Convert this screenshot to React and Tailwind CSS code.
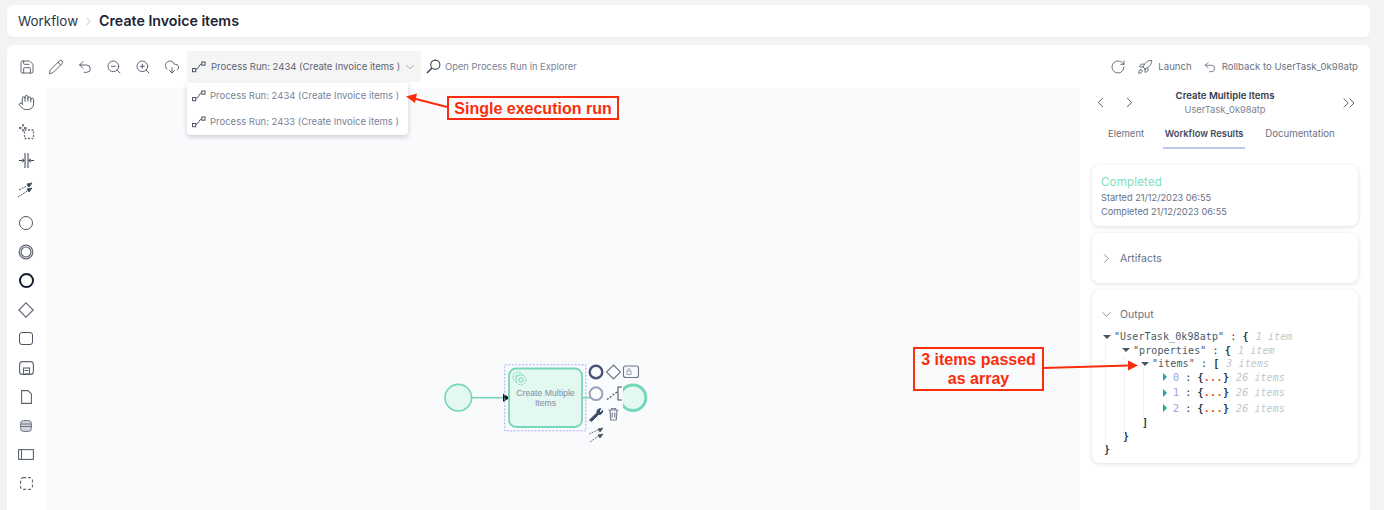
import React from "react";
import { Save, Pencil, Undo2, ZoomOut, ZoomIn, CloudDownload, ChevronDown, ChevronLeft, ChevronRight, ChevronsRight, RotateCw, Rocket, Hand } from "lucide-react";

const font = { fontFamily: "Inter, 'Noto Sans', sans-serif" };

function RunIcon({ className = "" }) {
  return (
    <svg width="14" height="12" viewBox="0 0 14 12" fill="none" stroke="#4b5563" strokeWidth="1" className={`shrink-0 ${className}`}>
      <rect x="0.5" y="7.5" width="3.2" height="3.2" />
      <rect x="9.8" y="1" width="3.2" height="3.2" />
      <path d="M4 8.5 C7 8 6.5 3.5 9.6 3" />
    </svg>
  );
}

function Bolt() {
  return (
    <svg width="20" height="16" viewBox="0 0 20 16" fill="none" stroke="#4b5563" strokeWidth="1">
      <path d="M3 8 L13 3" strokeDasharray="2 1" />
      <path d="M16 1 L11 2 L13 5 Z" fill="#374151" />
      <path d="M2 15 L13 8" strokeDasharray="2 1" />
      <path d="M16 6 L11 7 L13 10 Z" fill="#374151" />
    </svg>
  );
}

function Tool({ children, cls = "h-[29px]" }) {
  return <div className={`flex items-center justify-center w-full pr-[1px] ${cls}`}>{children}</div>;
}

function Palette() {
  const s = "#5b6472";
  return (
    <div className="w-[39px] shrink-0 flex flex-col">
      <Tool><Hand size={17} strokeWidth={1.2} color="#374151" /></Tool>
      <Tool>
        <svg width="17" height="17" viewBox="0 0 17 17" fill="none" stroke="#374151" strokeWidth="1.3">
          <path d="M5 1v2.5M5 6v2.5M1 5h2.5M6 5h2.5" />
          <rect x="6.5" y="7" width="9" height="8.5" strokeDasharray="2 1.5" stroke="#6b7280" />
        </svg>
      </Tool>
      <Tool>
        <svg width="17" height="15" viewBox="0 0 17 15" fill="#374151" stroke="#374151">
          <path d="M7 0v15M10 0v15" fill="none" strokeWidth="1" />
          <path d="M1 7.5h3M13 7.5h3" strokeWidth="1" />
          <path d="M4.5 5.5v4L6.5 7.5zM12.5 5.5v4l-2-2z" strokeWidth="0.3" />
        </svg>
      </Tool>
      <Tool cls="h-[29px] mb-[4px]"><Bolt /></Tool>
      <Tool><span className="block w-[14px] h-[14px] rounded-full border border-[#4b5563]" /></Tool>
      <Tool>
        <svg width="16" height="16" viewBox="0 0 16 16" fill="none">
          <circle cx="8" cy="8" r="6.8" stroke={s} strokeWidth="1.2" />
          <circle cx="8" cy="8" r="5" stroke={s} strokeWidth="1.2" />
        </svg>
      </Tool>
      <Tool><span className="block w-[15px] h-[15px] rounded-full border-[2.5px] border-[#111c33]" /></Tool>
      <Tool>
        <svg width="16" height="16" viewBox="0 0 16 16" fill="none" stroke={s} strokeWidth="1.1"><path d="M8 .8 15.2 8 8 15.2 .8 8Z" /></svg>
      </Tool>
      <Tool><span className="block w-[14px] h-[13px] rounded-[3px] border border-[#4b5563]" /></Tool>
      <Tool>
        <svg width="15" height="14" viewBox="0 0 15 14" fill="none" stroke={s} strokeWidth="1.1">
          <rect x=".6" y=".6" width="13.8" height="12.8" rx="3" />
          <rect x="4.5" y="7" width="6" height="6" />
          <path d="M5.5 9.5h4" />
        </svg>
      </Tool>
      <Tool>
        <svg width="11" height="14" viewBox="0 0 11 14" fill="none" stroke={s} strokeWidth="1.1"><path d="M.6.6h6.5l3.3 3.3v9.5H.6Z" /></svg>
      </Tool>
      <Tool>
        <svg width="12" height="12" viewBox="0 0 12 12" fill="#d1d5db" stroke="#6b7280" strokeWidth="1"><rect x=".6" y=".6" width="10.8" height="10.8" rx="3" /><path d="M.6 4h10.8M.6 6.5h10.8" /></svg>
      </Tool>
      <Tool>
        <svg width="16" height="11" viewBox="0 0 16 11" fill="none" stroke={s} strokeWidth="1.1"><rect x=".6" y=".6" width="14.8" height="9.8" /><path d="M3.5.6v9.8" /></svg>
      </Tool>
      <Tool>
        <svg width="13" height="13" viewBox="0 0 13 13" fill="none" stroke={s} strokeWidth="1.1"><rect x=".6" y=".6" width="11.8" height="11.8" rx="2.5" strokeDasharray="3 2" /></svg>
      </Tool>
    </div>
  );
}

function Diagram() {
  const teal = "#76d6ba";
  const fill = "#e4f8f2";
  return (
    <svg width="240" height="110" viewBox="430 350 240 110" className="absolute left-[384px] top-[262px]" fill="none">
      <circle cx="458.3" cy="397.7" r="13.3" fill={fill} stroke={teal} strokeWidth="1.6" />
      <path d="M472 397.7H504" stroke={teal} strokeWidth="1.6" />
      <path d="M503 393.7 510 397.7 503 401.7Z" fill="#111" />
      <circle cx="633" cy="397.7" r="12.8" fill={fill} stroke={teal} strokeWidth="3" />
      <rect x="587" y="365" width="36" height="62" fill="#fafbfd" />
      <path d="M582 397.7H590" stroke={teal} strokeWidth="1.6" />
      <rect x="509" y="368.5" width="73" height="58.5" rx="7" fill={fill} stroke={teal} strokeWidth="1.8" />
      <rect x="504.8" y="364.8" width="81" height="66" stroke="#a9a9f5" strokeWidth="1" strokeDasharray="2 1.5" />
      <g stroke={teal} strokeWidth="1" fill={fill}>
        <circle cx="518" cy="377" r="5" strokeDasharray="2 1" />
        <circle cx="518" cy="377" r="2.2" />
        <circle cx="521" cy="380" r="5" strokeDasharray="2 1" />
        <circle cx="521" cy="380" r="2.2" />
      </g>
      <text x="545.5" y="395.5" textAnchor="middle" fontSize="8.7" fill="#828c9c" fontFamily="Liberation Sans">Create Multiple</text>
      <text x="545.5" y="406" textAnchor="middle" fontSize="8.7" fill="#828c9c" fontFamily="Liberation Sans">Items</text>

      <circle cx="596" cy="372" r="6.3" stroke="#48527a" strokeWidth="2.4" />
      <path d="M613.5 365 620.5 372 613.5 379 606.5 372Z" stroke="#6b7589" strokeWidth="1.1" />
      <rect x="623.5" y="366" width="15" height="11.5" rx="2" stroke="#6b7589" strokeWidth="1.1" />
      <rect x="627" y="371" width="4" height="3.5" stroke="#8a93a5" strokeWidth="0.8" />
      <path d="M628 370.5a1.2 1.2 0 1 1 2 0" stroke="#8a93a5" strokeWidth="0.8" />
      <circle cx="596" cy="393.7" r="6.4" stroke="#9aa3b8" strokeWidth="2" />
      <path d="M607 399.5 617 392" stroke="#4b5563" strokeWidth="1.2" strokeDasharray="2 1.5" />
      <path d="M622 387h-4v13h4" stroke="#4b5563" strokeWidth="1.1" />
      <path d="M589.5 420 597 412.8c-.6-2.5 1.2-4.4 4-4 l-2 2.2 1.4 1.4 2.2-2c.4 2.6-1.6 4.5-4 4l-7 7Z" fill="#3d4a68" stroke="#3d4a68" strokeWidth="1" />
      <path d="M608.5 410h10M610 410l.7 10h5.6l.7-10M611.5 410v-1.5h4V410M612.2 412.5v5M614.8 412.5v5" stroke="#7a8496" strokeWidth="1.2" />
      <g stroke="#5b6472" strokeWidth="0.9">
        <path d="M589 434 600 429" strokeDasharray="2 1" />
        <path d="M590 442 600 435" strokeDasharray="2 1" />
        <path d="M603 428 598 429 600 432Z" fill="#374151" />
        <path d="M603 434 598 435 600 438Z" fill="#374151" />
      </g>
    </svg>
  );
}

function Row({ indent, children }) {
  return <div className="flex items-center whitespace-pre" style={{ paddingLeft: indent }}>{children}</div>;
}

const Tri = ({ open = true }) =>
  open ? (
    <svg width="8" height="6" viewBox="0 0 8 6" className="mr-[3px] shrink-0"><path d="M0 1h8L4 5Z" fill="#4b5563" /></svg>
  ) : (
    <svg width="6" height="8" viewBox="0 0 6 8" className="mr-[5px] shrink-0"><path d="M1 0l4 4-4 4Z" fill="#2aa198" /></svg>
  );

function Json() {
  const B = ({ c }) => <b className="text-[#1f3a44]">{c}</b>;
  const Note = ({ t }) => <i className="text-[#c3c6cb] ml-[7px]">{t}</i>;
  const Item = ({ n, cls = "" }) => (
    <div className={`h-[15.5px] flex items-center whitespace-pre pl-[59px] ${cls}`}>
      <Tri open={false} />
      <span className="text-[#9aa3dc]">{n}</span>
      <span className="text-[#1f3a44]"> : </span>
      <B c="{" />
      <b className="text-[#d9541e] tracking-[0.4px]">...</b>
      <B c="}" />
      <Note t="26 items" />
    </div>
  );
  return (
    <div className="relative mt-[8px] pl-[11px] text-[10px] leading-[13.5px] tracking-[0.1px] text-[#4a5a64]" style={{ fontFamily: "'DejaVu Sans Mono', monospace" }}>
      <Row indent={0}><Tri /><span>"UserTask_0k98atp"</span><span className="text-[#1f3a44]"> : </span><B c="{" /><Note t="1 item" /></Row>
      <Row indent={19}><Tri /><span>"properties"</span><span className="text-[#1f3a44]"> : </span><B c="{" /><Note t="1 item" /></Row>
      <Row indent={38}><Tri /><span>"items"</span><span className="text-[#1f3a44]"> : </span><B c="[" /><Note t="3 items" /></Row>
      <Item n="0" cls="-mt-px" />
      <Item n="1" />
      <Item n="2" />
      <Row indent={39}><B c="]" /></Row>
      <Row indent={20}><B c="}" /></Row>
      <Row indent={1}><B c="}" /></Row>
      <span className="absolute left-[13px] top-[12px] h-[106px] w-px bg-[#f0f1f3]" />
      <span className="absolute left-[32px] top-[26px] h-[78px] w-px bg-[#f0f1f3]" />
      <span className="absolute left-[51px] top-[39px] h-[52px] w-px bg-[#f0f1f3]" />
    </div>
  );
}

function Panel() {
  const card = "rounded-[8px] bg-white shadow-[0_1px_4px_rgba(15,23,42,0.14)] mx-[12px]";
  return (
    <div className="w-[290px] shrink-0 flex flex-col text-[#6b7280]">
      <div className="h-[31px] mt-[-1px] grid grid-cols-[1fr_auto_1fr] items-center px-[12px]">
        <div className="flex items-center">
          <ChevronLeft size={17} strokeWidth={1.2} color="#374151" />
          <ChevronRight size={17} strokeWidth={1.2} color="#374151" className="ml-[12px]" />
        </div>
        <div className="flex flex-col items-center pt-[1px]">
          <div className="text-[9.6px] font-semibold text-[#333b4d] leading-[14px]">Create Multiple Items</div>
          <div className="text-[9.3px] text-[#7b8494] leading-[14px]">UserTask_0k98atp</div>
        </div>
        <div className="flex justify-end"><ChevronsRight size={20} strokeWidth={1} color="#374151" className="translate-x-[1px]" /></div>
      </div>
      <div className="flex h-[32px] mt-[-1px] text-[9.5px] text-[#6b7280] pl-[28px] items-start whitespace-nowrap">
        <span className="pt-[10px]">Element</span>
        <span className="ml-[19px] w-[82px] pt-[10px] h-[32px] text-[9.3px] font-semibold text-[#434b63] border-b-2 border-[#bcc7ee] text-center">Workflow Results</span>
        <span className="ml-[20px] pt-[10px] text-[9.7px]">Documentation</span>
      </div>
      <div className={`${card} mt-[16px] h-[61px] px-[9px] pt-[11px]`}>
        <div className="text-[11.5px] leading-[12px] text-[#7ddcc0] tracking-[0.2px]">Completed</div>
        <div className="text-[9.2px] leading-[14px] mt-[3px] text-[#667085]">Started 21/12/2023 06:55</div>
        <div className="text-[9.2px] leading-[14px] text-[#667085]">Completed 21/12/2023 06:55</div>
      </div>
      <div className={`${card} mt-[7px] h-[50px] flex items-center pl-[7px]`}>
        <ChevronRight size={15} strokeWidth={1.2} color="#6b7280" />
        <span className="text-[10.5px] ml-[6px] pt-[1px] text-[#667085]">Artifacts</span>
      </div>
      <div className={`${card} mt-[7px] h-[173px] pt-[16px]`}>
        <div className="flex items-center pl-[7px] h-[16px]">
          <ChevronDown size={15} strokeWidth={1.2} color="#6b7280" />
          <span className="text-[10.5px] ml-[6px] pt-[1px] text-[#667085]">Output</span>
        </div>
        <Json />
      </div>
    </div>
  );
}

export default function App() {
  return (
    <div className="relative w-[1384px] h-[510px] overflow-hidden bg-[#f3f3f3] flex flex-col pl-[7px] pr-[14px] pt-[5px]" style={font}>
      <header className="h-[32px] shrink-0 rounded-[6px] bg-white flex items-center pl-[11px] shadow-[0_1px_2px_rgba(0,0,0,0.03)]">
        <span className="text-[13.4px] text-[#2d3648]">Workflow</span>
        <ChevronRight size={13} strokeWidth={1.2} color="#9ca3af" className="mx-[4px]" />
        <span className="text-[14.2px] font-semibold text-[#1c2434] whitespace-nowrap">Create Invoice items</span>
      </header>
      <main className="mt-[8px] flex-1 min-h-0 rounded-t-[6px] bg-white flex flex-col">
        <div className="relative h-[43px] shrink-0 flex items-center pl-[12px] pr-[12px] text-[#6b7280]">
          <div className="flex items-center w-[168px]">
            <span className="w-[29px] flex"><Save size={16} strokeWidth={1.2} color="#374151" /></span>
            <span className="w-[29px] flex"><Pencil size={16} strokeWidth={1.2} color="#374151" /></span>
            <span className="w-[29px] flex"><Undo2 size={16} strokeWidth={1.2} color="#374151" /></span>
            <span className="w-[29px] flex"><ZoomOut size={16} strokeWidth={1.2} color="#374151" /></span>
            <span className="w-[29px] flex"><ZoomIn size={16} strokeWidth={1.2} color="#374151" /></span>
            <span className="w-[23px] flex"><CloudDownload size={16} strokeWidth={1.2} color="#374151" /></span>
          </div>
          <div className="relative h-[31px] w-[234px] bg-[#f5f5f5] flex items-center pl-[5px] pr-[5px] text-[9.5px] text-[#5b6472] whitespace-nowrap">
            <RunIcon />
            <span className="ml-[5px] pt-[1px]">Process Run: 2434 (Create Invoice items )</span>
            <ChevronDown size={14} strokeWidth={1} color="#6b7280" className="ml-auto translate-x-[1px]" />
            <div className="absolute left-0 top-[32px] w-[221px] h-[52px] z-10 bg-white rounded-b-[4px] shadow-[0_2px_5px_rgba(15,23,42,0.2)] flex flex-col text-[#7a8296]">
              <div className="h-[26px] flex items-center pl-[5px]"><RunIcon /><span className="ml-[4px]">Process Run: 2434 (Create Invoice items )</span></div>
              <div className="h-[26px] flex items-center pl-[5px]"><RunIcon /><span className="ml-[4px]">Process Run: 2433 (Create Invoice items )</span></div>
            </div>
          </div>
          <svg width="15" height="15" viewBox="0 0 15 15" fill="none" stroke="#374151" strokeWidth="1.1" className="ml-[5px] shrink-0">
            <circle cx="9.3" cy="5.7" r="4.6" />
            <path d="M6 9 1 14" strokeWidth="1.4" />
          </svg>
          <span className="ml-[4px] pt-[1px] text-[9.4px] text-[#7a8296] whitespace-nowrap">Open Process Run in Explorer</span>
          <div className="ml-auto flex items-center text-[9.6px] text-[#6b7280] whitespace-nowrap">
            <RotateCw size={16} strokeWidth={1.1} color="#374151" />
            <Rocket size={16} strokeWidth={1.1} color="#374151" className="ml-[11px]" />
            <span className="ml-[5px] pt-[1px]">Launch</span>
            <Undo2 size={14} strokeWidth={1.1} color="#374151" className="ml-[11px]" />
            <span className="ml-[5px] pt-[1px]">Rollback to UserTask_0k98atp</span>
          </div>
        </div>
        <div className="flex-1 min-h-0 flex">
          <Palette />
          <div className="relative flex-1 bg-[#f9fafc]">
            <Diagram />
          </div>
          <Panel />
        </div>
      </main>

      <div className="absolute left-[447px] top-[96px] w-[172px] h-[24px] pt-[1px] z-20 border-2 border-[#f92d0c] bg-white/40 text-[#f92d0c] text-[16px] font-bold flex items-center justify-center whitespace-nowrap" style={{ fontFamily: "'Liberation Sans', sans-serif" }}>
        Single execution run
      </div>
      <div className="absolute left-[913px] top-[347px] w-[131px] h-[44px] z-20 border-2 border-[#f92d0c] bg-[#f9fafc] text-[#f92d0c] text-[16px] leading-[19px] font-bold flex items-center justify-center text-center" style={{ fontFamily: "'Liberation Sans', sans-serif" }}>
        3 items passed<br />as array
      </div>
      <svg width="1384" height="510" className="absolute left-0 top-0 z-30 pointer-events-none" fill="none">
        <path d="M447 107 414 98.5" stroke="#f92d0c" strokeWidth="2" />
        <path d="M406 96.5 417 93.5 415 103Z" fill="#f92d0c" />
        <path d="M1043 368 1129 365.5" stroke="#f92d0c" strokeWidth="2" />
        <path d="M1138 365.5 1128 360.5 1128 370.5Z" fill="#f92d0c" />
      </svg>
    </div>
  );
}
